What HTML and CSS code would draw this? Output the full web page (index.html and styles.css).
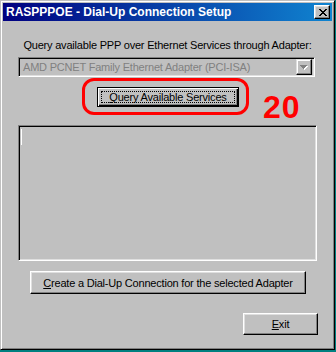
FILE: index.html
```html
<!DOCTYPE html>
<html lang="en">
<head>
  <meta charset="UTF-8" />
  <title>RASPPPOE - Dial-Up Connection Setup</title>
  <link rel="stylesheet" href="styles.css">
</head>
<body>
  <div class="window">
    <div class="titlebar">
      <span class="title">RASPPPOE - Dial-Up Connection Setup</span>
      <span class="close">
        <svg width="8" height="7" viewBox="0 0 8 7" shape-rendering="crispEdges"><path d="M0 0h2v1h-2zM6 0h2v1h-2zM1 1h2v1h-2zM5 1h2v1h-2zM2 2h4v1h-4zM3 3h2v1h-2zM2 4h4v1h-4zM1 5h2v1h-2zM5 5h2v1h-2zM0 6h2v1h-2zM6 6h2v1h-2z" fill="#000"/></svg>
      </span>
    </div>

    <div class="content">
      <p class="label">Query available PPP over Ethernet Services through Adapter:</p>

      <div class="combo">
        <span class="combo-text">AMD PCNET Family Ethernet Adapter (PCI-ISA)</span>
        <span class="combo-btn">
          <svg width="8" height="5" viewBox="0 0 8 5" shape-rendering="crispEdges">
            <path d="M1 1h7v1h-7zM2 2h5v1h-5zM3 3h3v1h-3zM4 4h1v1h-1z" fill="#fff"/>
            <path d="M0 0h7v1h-7zM1 1h5v1h-5zM2 2h3v1h-3zM3 3h1v1h-1z" fill="#808080"/>
          </svg>
        </span>
      </div>

      <div class="row-center query-row">
        <button class="btn default"><span class="focus"><u>Q</u>uery Available Services</span></button>
      </div>

      <div class="list"><span class="caret"></span></div>

      <div class="row-center create-row">
        <button class="btn create"><u>C</u>reate a Dial-Up Connection for the selected Adapter</button>
      </div>

      <div class="exit-row">
        <button class="btn exit"><u>E</u>xit</button>
      </div>
    </div>

    <div class="annot-ring"></div>
    <div class="annot-num">20</div>
  </div>
</body>
</html>
```

FILE: styles.css
```css
body {
  margin: 0;
  background: #008080;
  font-family: "Liberation Sans", Arial, sans-serif;
  font-size: 11px;
  letter-spacing: -0.2px;
  color: #000;
}
.window {
  position: relative;
  width: 335px;
  height: 350px;
  box-sizing: border-box;
  padding: 2px;
  background: #c0c0c0;
  border: 1px solid;
  border-color: #c0c0c0 #000 #000 #c0c0c0;
  box-shadow: inset 1px 1px #fff, inset -1px -1px #808080;
}
.titlebar {
  height: 18px;
  display: flex;
  align-items: center;
  justify-content: space-between;
  padding: 0 2px 0 3px;
  background: linear-gradient(to right, #000080, #1084d0);
  color: #fff;
}
.title {
  font-weight: bold;
  font-size: 12px;
  letter-spacing: 0;
}
.close {
  width: 16px;
  height: 14px;
  box-sizing: border-box;
  display: flex;
  justify-content: center;
  align-items: center;
  padding-left: 1px;
  background: #c0c0c0;
  border: 1px solid;
  border-color: #fff #000 #000 #fff;
  box-shadow: inset -1px -1px #808080, inset 1px 1px #dfdfdf;
}
.content {
  padding-top: 18px;
}
.label {
  margin: 0;
  height: 13px;
  line-height: 13px;
  text-align: center;
}
.combo {
  margin: 5px 0 0 15px;
  width: 297px;
  height: 20px;
  box-sizing: border-box;
  display: flex;
  align-items: center;
  justify-content: space-between;
  padding: 2px;
  border: 1px solid;
  border-color: #808080 #fff #fff #808080;
  box-shadow: inset 1px 1px #000, inset -1px -1px #dfdfdf;
}
.combo-text {
  padding-left: 2px;
  color: #808080;
}
.combo-btn {
  width: 16px;
  height: 16px;
  box-sizing: border-box;
  display: flex;
  justify-content: center;
  align-items: center;
  border: 1px solid;
  border-color: #dfdfdf #000 #000 #dfdfdf;
  box-shadow: inset -1px -1px #808080, inset 1px 1px #fff;
}
.row-center {
  display: flex;
  justify-content: center;
}
.btn {
  font: inherit;
  letter-spacing: inherit;
  color: #000;
  background: #c0c0c0;
  box-sizing: border-box;
  padding: 0;
  border: 1px solid;
  border-color: #fff #000 #000 #fff;
  box-shadow: inset -1px -1px #808080, inset 1px 1px #dfdfdf;
}
.query-row {
  margin-top: 10px;
  padding-left: 1px;
}
.default {
  width: 142px;
  height: 20px;
  border: 1px solid #000;
  box-shadow: inset 1px 1px #fff, inset -1px -1px #000, inset -2px -2px #808080;
  display: flex;
  padding: 3px;
}
.focus {
  flex: 1;
  line-height: 10px;
  border: 1px dotted #000;
}
.list {
  margin: 18px 0 0 15px;
  width: 299px;
  height: 136px;
  box-sizing: border-box;
  padding: 3px 0 0 2px;
  border: 1px solid;
  border-color: #808080 #fff #fff #808080;
  box-shadow: inset 1px 1px #000, inset -1px -1px #dfdfdf;
}
.caret {
  display: block;
  width: 1px;
  height: 16px;
  background: #fff;
}
.create-row {
  margin-top: 10px;
  padding-left: 1px;
}
.create {
  width: 276px;
  height: 23px;
}
.exit-row {
  margin: 19px 0 0 240px;
}
.exit {
  width: 75px;
  height: 22px;
}
.annot-ring {
  position: absolute;
  left: 81px;
  top: 77px;
  width: 167px;
  height: 37px;
  box-sizing: border-box;
  border: 3px solid #ff0000;
  border-radius: 12px;
}
.annot-num {
  position: absolute;
  left: 262px;
  top: 90px;
  font-size: 32px;
  line-height: 32px;
  font-weight: bold;
  letter-spacing: 1px;
  color: #ff0000;
}
```
